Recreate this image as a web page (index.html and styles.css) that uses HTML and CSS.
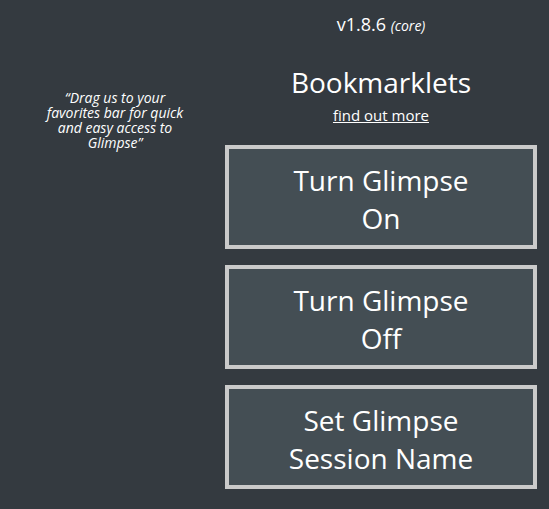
FILE: index.html
```html
<!DOCTYPE html>
<html lang="en">
<head>
<meta charset="utf-8">
<title>Glimpse</title>
<link rel="stylesheet" href="styles.css">
</head>
<body>
<div class="page">
  <aside class="side">
    <p class="quote">“Drag us to your favorites bar for quick and easy access to Glimpse”</p>
  </aside>
  <main class="main">
    <div class="version">v1.8.6 <em>(core)</em></div>
    <h2 class="title">Bookmarklets</h2>
    <a class="more" href="#">find out more</a>
    <div class="buttons">
      <a class="bm" href="#">Turn Glimpse On</a>
      <a class="bm" href="#">Turn Glimpse Off</a>
      <a class="bm" href="#">Set Glimpse Session Name</a>
    </div>
  </main>
</div>
</body>
</html>
```
FILE: styles.css
```css
html, body {
  margin: 0;
  padding: 0;
}
body {
  background: #343a40;
  color: #ffffff;
  font-family: "Open Sans", "Noto Sans", "DejaVu Sans", sans-serif;
}
.page {
  display: flex;
  align-items: flex-start;
}
.side {
  width: 220px;
  padding-left: 5px;
  padding-top: 90px;
  text-align: center;
}
.quote {
  width: 148px;
  margin: 0 auto;
  font-size: 14px;
  line-height: 15px;
  font-style: italic;
}
.main {
  width: 312px;
  display: flex;
  flex-direction: column;
  align-items: center;
}
.version {
  margin-top: 12px;
  font-size: 18px;
}
.version em {
  font-size: 14px;
}
.title {
  margin: 27px 0 4px;
  font-size: 28px;
  font-weight: normal;
}
.more {
  color: #ffffff;
  font-size: 15px;
  text-decoration: underline;
}
.buttons {
  margin-top: 20px;
  width: 100%;
  display: flex;
  flex-direction: column;
  gap: 16px;
}
.bm {
  display: block;
  border: 4px solid #cacaca;
  background: #444e54;
  color: #ffffff;
  text-decoration: none;
  text-align: center;
  font-size: 28px;
  line-height: 38px;
  padding: 12px 50px 8px;
}
```
